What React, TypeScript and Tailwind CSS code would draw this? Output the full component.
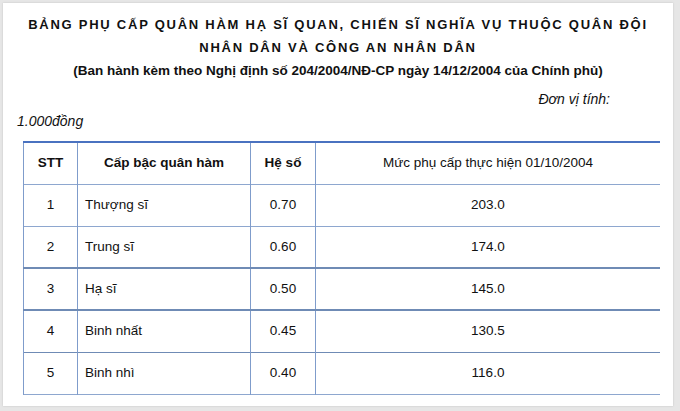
const rows = [
  { stt: "1", name: "Thượng sĩ", coef: "0.70", amount: "203.0" },
  { stt: "2", name: "Trung sĩ", coef: "0.60", amount: "174.0" },
  { stt: "3", name: "Hạ sĩ", coef: "0.50", amount: "145.0" },
  { stt: "4", name: "Binh nhất", coef: "0.45", amount: "130.5" },
  { stt: "5", name: "Binh nhì", coef: "0.40", amount: "116.0" },
];

function App() {
  return (
    <div className="w-[680px] h-[411px] bg-[#e6e6e6] pl-[3px] pt-[3px] pr-[7px] pb-[5px] font-['Liberation_Sans',Arial,sans-serif] text-[#111]">
      <div className="h-full bg-white shadow-[0_0_2px_rgba(0,0,0,0.15)] flex flex-col">
        <div className="pt-[10px] text-center font-bold">
          <div className="text-[13px] leading-[23px] tracking-[1.75px]">
            BẢNG PHỤ CẤP QUÂN HÀM HẠ SĨ QUAN, CHIẾN SĨ NGHĨA VỤ THUỘC QUÂN ĐỘI
          </div>
          <div className="text-[13px] leading-[23px] tracking-[1.75px]">
            NHÂN DÂN VÀ CÔNG AN NHÂN DÂN
          </div>
          <div className="text-[13.5px] leading-[23px]">
            (Ban hành kèm theo Nghị định số 204/2004/NĐ-CP ngày 14/12/2004 của Chính phủ)
          </div>
        </div>
        <div className="mt-[6px] text-[14px] leading-[22px] italic text-right pr-[63px]">Đơn vị tính:</div>
        <div className="text-[14px] leading-[22px] italic pl-[14px]">1.000đồng</div>
        <table className="mt-[9px] ml-[20px] w-[637px] border-collapse text-[13.5px] table-fixed">
          <colgroup>
            <col className="w-[54px]" />
            <col className="w-[173px]" />
            <col className="w-[65px]" />
            <col />
          </colgroup>
          <thead>
            <tr className="h-[42px] border-t-2 border-[#4a72c0]">
              <th className="border-l border-[#7f9ccb] font-bold">STT</th>
              <th className="border-l border-[#7f9ccb] font-bold">Cấp bậc quân hàm</th>
              <th className="border-l border-r border-[#7f9ccb] font-bold">Hệ số</th>
              <th className="font-normal">Mức phụ cấp thực hiện 01/10/2004</th>
            </tr>
          </thead>
          <tbody>
            {rows.map((r, i) => (
              <tr
                key={r.stt}
                className={`h-[42px] border-t border-b ${i === 2 || i === 3 ? "border-t-2 border-[#6f8bb5]" : "border-[#8ea7cf]"}`}
              >
                <td className="text-center border-l border-[#7f9ccb]">{r.stt}</td>
                <td className="pl-[7px] border-l border-[#7f9ccb]">{r.name}</td>
                <td className="text-center border-l border-r border-[#7f9ccb]">{r.coef}</td>
                <td className="text-center">{r.amount}</td>
              </tr>
            ))}
          </tbody>
        </table>
      </div>
    </div>
  );
}

export default App;
